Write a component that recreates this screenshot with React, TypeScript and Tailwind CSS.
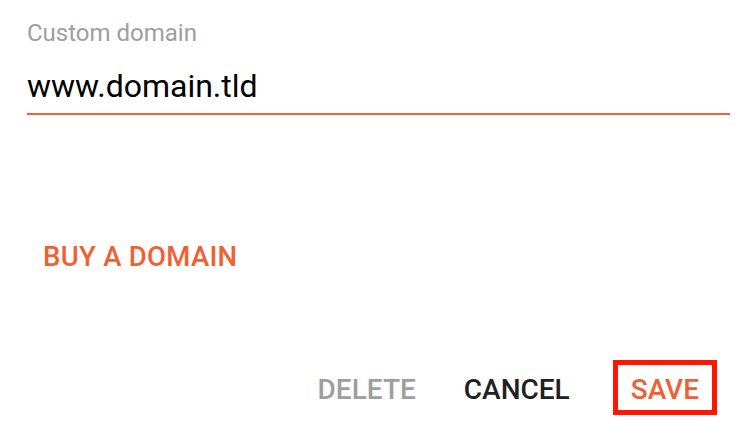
import React from 'react';

export default function App() {
  return (
    <div className="w-[746px] h-[430px] bg-white font-['Roboto',sans-serif] flex flex-col">
      {/* 入力欄 */}
      <div className="pl-[27px] pr-[16px] pt-[18px]">
        <label className="block text-[24px] leading-[30px] text-[#9e9e9e]">Custom domain</label>
        <div className="mt-[18px] border-b-2 border-[#ee6135] pb-[7px]">
          <span className="block text-[32px] leading-[40px] text-black">www.domain.tld</span>
        </div>
      </div>

      <div className="mt-[126px] pl-[43px]">
        <button className="text-[27.5px] leading-[32px] font-medium text-[#ee6135] tracking-[0.3px]">BUY A DOMAIN</button>
      </div>

      <div className="mt-auto mb-[15px] flex items-baseline justify-end pr-[29px]">
        <button className="text-[28px] leading-[32px] font-medium text-[#9e9e9e] mr-[48px]">DELETE</button>
        <button className="text-[28px] leading-[32px] font-medium text-[#212121] mr-[43px]">CANCEL</button>
        <button className="border-[5px] border-[#ff1500] px-[13px] pt-[9px] pb-[4px] text-[28px] leading-[32px] font-medium text-[#ee6135]">
          SAVE
        </button>
      </div>
    </div>
  );
}
